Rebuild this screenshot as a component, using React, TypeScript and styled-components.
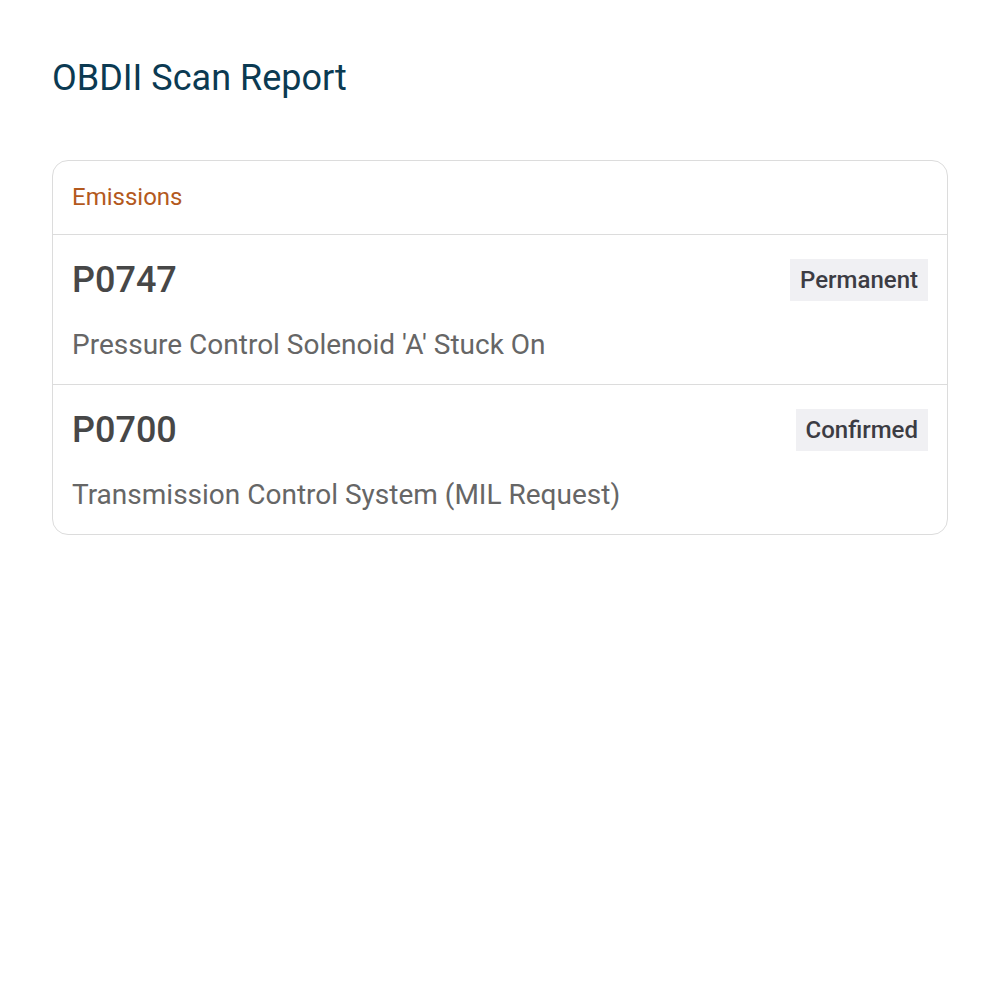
import styled, { createGlobalStyle } from "styled-components";

const GlobalStyle = createGlobalStyle`
  body {
    margin: 0;
    background: #ffffff;
    font-family: Roboto, "Liberation Sans", sans-serif;
  }
`;

const Page = styled.main`
  padding: 56px 52px;
`;

const Title = styled.h1`
  margin: 0 0 60px;
  font-size: 36px;
  line-height: 44px;
  font-weight: 400;
  color: #0b3a52;
`;

const Card = styled.section`
  border: 1px solid #dcdcdc;
  border-radius: 16px;
  overflow: hidden;
`;

const CardHeader = styled.div`
  padding: 20px 19px 21px;
  font-size: 24px;
  line-height: 32px;
  color: #b3591d;
  border-bottom: 1px solid #dcdcdc;
`;

const CodeRow = styled.div`
  padding: 24px 19px 21px;
  & + & {
    border-top: 1px solid #dcdcdc;
  }
`;

const TopLine = styled.div`
  display: flex;
  align-items: center;
  justify-content: space-between;
  height: 42px;
`;

const Code = styled.span`
  font-size: 36px;
  font-weight: 500;
  color: #474747;
`;

const Badge = styled.span`
  display: inline-flex;
  align-items: center;
  height: 42px;
  padding: 0 10px;
  background: #f0f0f3;
  color: #3c3c43;
  font-size: 24px;
  font-weight: 500;
`;

const Description = styled.p`
  margin: 26px 0 0;
  font-size: 28px;
  line-height: 36px;
  color: #666666;
`;

const codes = [
  { code: "P0747", status: "Permanent", text: "Pressure Control Solenoid 'A' Stuck On" },
  { code: "P0700", status: "Confirmed", text: "Transmission Control System (MIL Request)" },
];

export default function App() {
  return (
    <>
      <GlobalStyle />
      <Page>
        <Title>OBDII Scan Report</Title>
        <Card>
          <CardHeader>Emissions</CardHeader>
          {codes.map((c) => (
            <CodeRow key={c.code}>
              <TopLine>
                <Code>{c.code}</Code>
                <Badge>{c.status}</Badge>
              </TopLine>
              <Description>{c.text}</Description>
            </CodeRow>
          ))}
        </Card>
      </Page>
    </>
  );
}
